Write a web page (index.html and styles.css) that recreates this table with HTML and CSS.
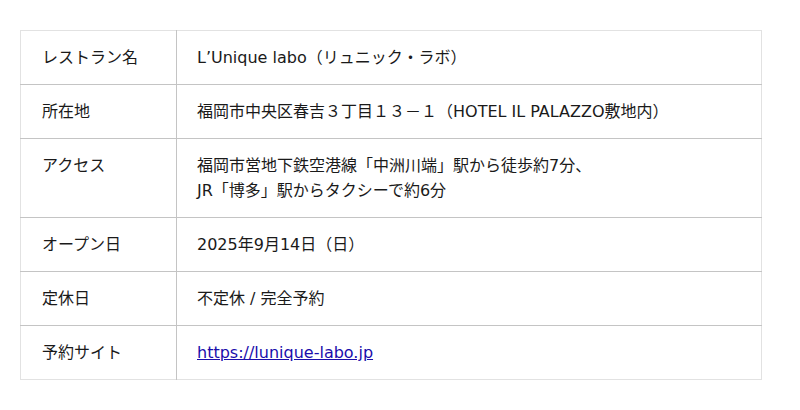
FILE: index.html
```html
<!DOCTYPE html>
<html lang="ja">
<head>
<meta charset="utf-8">
<link rel="stylesheet" href="styles.css">
</head>
<body>
<table class="info">
  <tr><th>レストラン名</th><td>L’Unique labo（リュニック・ラボ）</td></tr>
  <tr><th>所在地</th><td>福岡市中央区春吉３丁目１３－１（HOTEL IL PALAZZO敷地内）</td></tr>
  <tr><th>アクセス</th><td>福岡市営地下鉄空港線「中洲川端」駅から徒歩約7分、<br>JR「博多」駅からタクシーで約6分</td></tr>
  <tr><th>オープン日</th><td>2025年9月14日（日）</td></tr>
  <tr><th>定休日</th><td>不定休 / 完全予約</td></tr>
  <tr><th>予約サイト</th><td><a class="link" href="https://lunique-labo.jp">https://lunique-labo.jp</a></td></tr>
</table>
</body>
</html>
```
FILE: styles.css
```css
html, body {
  margin: 0;
  padding: 0;
  background: #ffffff;
}
body {
  padding: 30px 38px 0 20px;
  font-family: "DejaVu Sans", "Noto Sans CJK JP", sans-serif;
  font-size: 16px;
  color: #1a1a1a;
}
.info {
  border-collapse: collapse;
  width: 742px;
  border: 1px solid #e2e2e2;
}
.info th, .info td {
  text-align: left;
  font-weight: normal;
  vertical-align: top;
  line-height: 25px;
  padding: 14px 20px 14px 21px;
  border-top: 1px solid #c4c4c4;
}
.info tr:first-child th, .info tr:first-child td {
  border-top: 1px solid #e2e2e2;
}
.info th {
  width: 114px;
  border-right: 1px solid #c4c4c4;
}
.info td {
  padding-left: 20px;
}
.link {
  color: #1a0dab;
  text-decoration: underline;
}
```
